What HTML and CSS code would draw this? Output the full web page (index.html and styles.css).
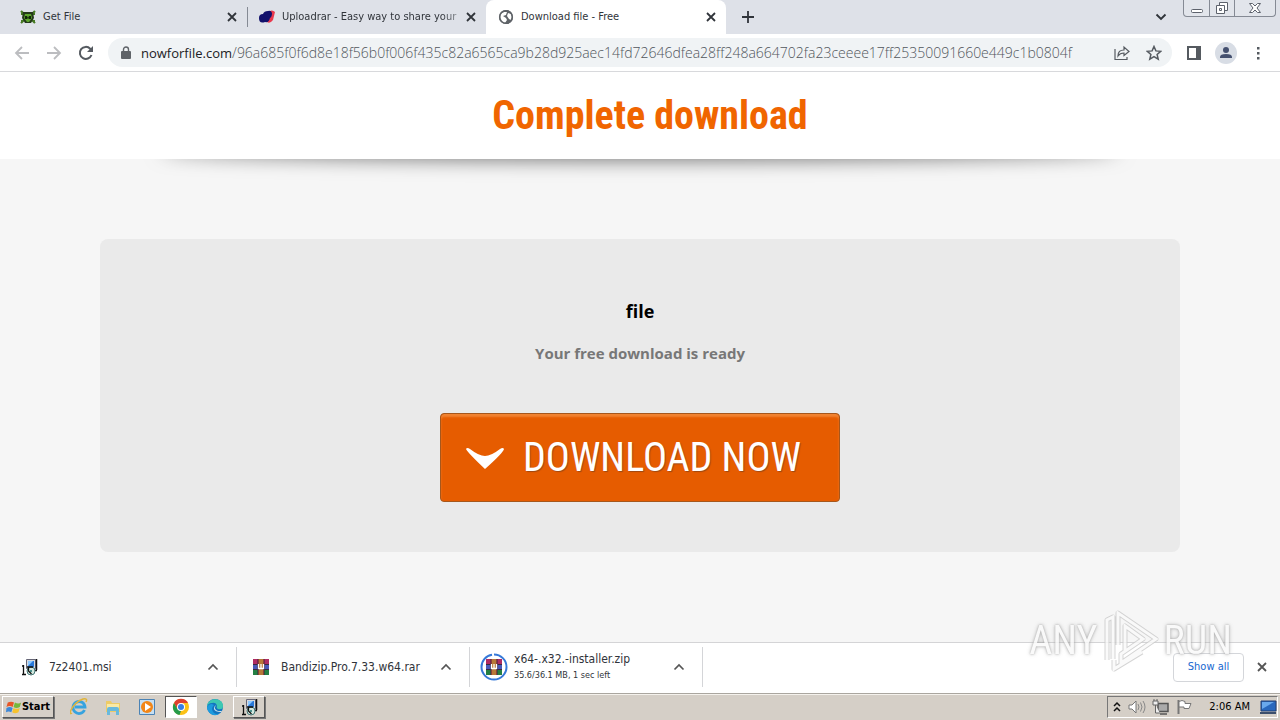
FILE: index.html
```html
<!DOCTYPE html>
<html lang="en">
<head>
<meta charset="utf-8">
<title>Download file - Free</title>
<link rel="stylesheet" href="styles.css">
</head>
<body>
<svg class="defs" aria-hidden="true">
  <symbol id="x" viewBox="0 0 10 10"><path d="M1 1l8 8M9 1l-8 8" stroke="currentColor" stroke-width="1.8" fill="none"/></symbol>
  <symbol id="up" viewBox="0 0 12 8"><path d="M1.500 6.500L6 2l4.500 4.500" stroke="currentColor" stroke-width="1.700" fill="none"/></symbol>
  <symbol id="rar" viewBox="0 0 16 16"><path fill="#b02b62" d="M0 0h16v5H0z"/><path fill="#4858b8" d="M0 5h16v6H0z"/><path fill="#247f43" d="M0 11h16v5H0z"/><path fill="#d65a32" d="M5 0h6v16H5z"/><path d="M0 5.500h16M0 10.500h16M5 0v16M11 0v16" stroke="#3b2740" fill="none"/><path fill="#b87838" d="M6 0h4v16H6z"/><path d="M5.500 5v4.500h5V5M8 5v4" fill="none" stroke="#fff" stroke-width="1.300"/></symbol>
  <symbol id="msi" viewBox="0 0 18 18"><path fill="#d5d9de" stroke="#667" d="M6.500 1.500h9v9h-9z"/><path fill="#2878d8" d="M8 3h6v6H8z"/><path fill="#8cc8ff" d="M8 3h5L8 8z"/><path d="M16.500 1v11M9 12.500h8" stroke="#111" stroke-width="1.500"/><circle cx="11" cy="13" r="4" fill="#d5e9df" stroke="#477"/><circle cx="11" cy="13" r="1" fill="#277"/><path d="M3.500 7v9M2 16.500h4M2 8h2M7 9h6M8.500 9v4l3 3" fill="none" stroke="#111" stroke-width="1.300"/></symbol>
</svg>

<header class="tabs">
  <div class="tab">
    <svg class="icon16" viewBox="0 0 16 16"><path d="M1 2l3 3M15 2l-3 3M1 14l3-3M15 14l-3-3M1 5h3M12 5h3M1 12h3M12 12h3" stroke="#477a24" stroke-width="2.200"/><path d="M3 3h10l1 6-3 5H5L2 9z" fill="#24391a"/><path d="M5 5h6l1 4-3 4H7L4 9z" fill="#5da52d"/><path d="M5 7h2l1 2 1-2h2v3H9l-1-1-1 1H5z" fill="#102409"/></svg>
    <span class="title">Get File</span>
    <button class="close" aria-label="Close Get File"><svg viewBox="0 0 10 10"><use href="#x"/></svg></button>
  </div>
  <div class="tab divided">
    <svg class="icon16" viewBox="0 0 16 16"><path d="M9 3q4-3 7 0l-2 8q-3 4-6 2z" fill="#e9384d"/><path d="M0 9q0-4 4-4 1-3 5-3 3-1 4 2 0 4-2 5-1 5-5 4-6 2-6-4z" fill="#11106b"/></svg>
    <span class="title fade">Uploadrar - Easy way to share your</span>
    <button class="close" aria-label="Close Uploadrar"><svg viewBox="0 0 10 10"><use href="#x"/></svg></button>
  </div>
  <div class="tab active">
    <svg class="icon16" viewBox="0 0 16 16"><circle cx="8" cy="8" r="7" fill="#5f6368"/><path d="M2 8q0-4 4-5l3 0-1 3-3 1 3 2 1 2-2 3q-5-1-5-6zM10 4l3 1 1 3-1 3-2-1-2-3z" fill="#fff"/><circle cx="8" cy="8" r="6.300" fill="none" stroke="#5f6368" stroke-width="1.600"/></svg>
    <span class="title">Download file - Free</span>
    <button class="close" aria-label="Close Download file"><svg viewBox="0 0 10 10"><use href="#x"/></svg></button>
  </div>
  <button class="newtab" aria-label="New tab"><svg viewBox="0 0 12 12"><path d="M6 0v12M0 6h12" stroke="currentColor" stroke-width="1.800"/></svg></button>
  <button class="search" aria-label="Search tabs"><svg viewBox="0 0 12 8"><path d="M1.500 1.500L6 6l4.500-4.500" stroke="currentColor" stroke-width="1.900" fill="none"/></svg></button>
  <div class="caption">
    <button aria-label="Minimize"><svg viewBox="0 0 14 14"><rect x="1.500" y="8.500" width="11" height="3" rx="1" fill="#fff" stroke="#5d626c"/></svg></button>
    <button aria-label="Restore"><svg viewBox="0 0 14 14"><path fill="#fff" stroke="#5d626c" d="M4.500 1.500h8v8h-8z"/><path fill="#fff" stroke="#5d626c" d="M1.500 4.500h8v8h-8zM4.500 7.500h2v2h-2z"/></svg></button>
    <button aria-label="Close window"><svg viewBox="0 0 14 14"><path fill="#fff" stroke="#5d626c" d="M1.500 2.500h3L7 5l2.500-2.500h3L9 7l3.500 4.500h-3L7 9l-2.500 2.500h-3L5 7z"/></svg></button>
  </div>
</header>

<nav class="toolbar" aria-label="Browser">
  <button class="nav off" aria-label="Back"><svg viewBox="0 0 16 16"><path d="M15 8H2M8 2L2 8l6 6" fill="none" stroke="currentColor" stroke-width="1.800"/></svg></button>
  <button class="nav off" aria-label="Forward"><svg viewBox="0 0 16 16"><path d="M1 8h13M8 2l6 6-6 6" fill="none" stroke="currentColor" stroke-width="1.800"/></svg></button>
  <button class="nav" aria-label="Reload"><svg viewBox="0 0 16 16"><path d="M13.500 10A6 6 0 1 1 12.200 3.700L14 5.500" fill="none" stroke="currentColor" stroke-width="2"/><path d="M15 1v6H9z" fill="currentColor"/></svg></button>
  <div class="omnibox">
    <svg class="lock" viewBox="0 0 10 14"><path d="M1 5h8q1 0 1 1v6q0 1-1 1H1q-1 0-1-1V6q0-1 1-1z" fill="#5f6368"/><path d="M2.500 6V3.500a2.500 2.500 0 0 1 5 0V6" fill="none" stroke="#5f6368" stroke-width="1.400"/></svg>
    <div class="url" role="textbox" aria-label="Address"><b>nowforfile.com</b>/96a685f0f6d8e18f56b0f006f435c82a6565ca9b28d925aec14fd72646dfea28ff248a664702fa23ceeee17ff25350091660e449c1b0804f</div>
    <button class="nav" aria-label="Share"><svg viewBox="0 0 16 16"><path d="M1 4v10.500h12V12M4 11q0-6 6-6V2l5 4.500-5 4V8q-4 0-6 3z" fill="none" stroke="currentColor" stroke-width="1.200"/></svg></button>
    <button class="nav" aria-label="Bookmark"><svg viewBox="0 0 16 16"><path d="M8 1.500l1.900 4.400 4.800.4-3.600 3.200 1.100 4.700L8 11.700l-4.200 2.500 1.100-4.700-3.600-3.200 4.800-.4z" fill="none" stroke="currentColor" stroke-width="1.500"/></svg></button>
  </div>
  <button class="nav" aria-label="Side panel"><svg viewBox="0 0 16 16"><path d="M2 2h12v12H2z" fill="none" stroke="currentColor" stroke-width="2"/><path d="M10 2h4v12h-4z" fill="currentColor"/></svg></button>
  <button class="nav avatar" aria-label="Profile"><svg viewBox="0 0 22 22"><circle cx="11" cy="11" r="11" fill="#d8dde5"/><circle cx="11" cy="8" r="3" fill="#44506f"/><path d="M5 16v-1q0-3 6-3t6 3v1z" fill="#44506f"/></svg></button>
  <button class="nav" aria-label="Menu"><svg viewBox="0 0 16 16"><path d="M7 2h2.500v2.500H7zM7 7h2.500v2.500H7zM7 12h2.500v2.500H7z" fill="currentColor"/></svg></button>
</nav>

<main class="page">
  <div class="masthead"><h1>Complete download</h1></div>
  <div class="shade"></div>
  <section class="card">
    <h2>file</h2>
    <p>Your free download is ready</p>
    <button class="download"><svg viewBox="0 0 40 22"><path d="M1 2q1-2 4 0 9 7 15 7t15-7q3-2 4 0-1 4-19 20Q3 6 1 2z" fill="#fff"/></svg><span>DOWNLOAD NOW</span></button>
  </section>
</main>

<aside class="shelf" aria-label="Downloads">
  <div class="item"><svg class="file" viewBox="0 0 18 18"><use href="#msi"/></svg><div class="name">7z2401.msi</div><button aria-label="Options for 7z2401.msi"><svg viewBox="0 0 12 8"><use href="#up"/></svg></button></div>
  <div class="item archive"><svg class="file" viewBox="0 0 18 18"><use href="#rar" x="1" y="1" width="16" height="16"/></svg><div class="name">Bandizip.Pro.7.33.w64.rar</div><button aria-label="Options for Bandizip"><svg viewBox="0 0 12 8"><use href="#up"/></svg></button></div>
  <div class="item busy"><svg class="file" viewBox="0 0 28 28"><circle cx="14" cy="14" r="12.500" fill="none" stroke="#3678d8" stroke-width="2" stroke-dasharray="76 3" transform="rotate(-90 14 14)"/><use href="#rar" x="6" y="6" width="16" height="16"/></svg><div class="name">x64-.x32.-installer.zip<small>35.6/36.1 MB, 1 sec left</small></div><button aria-label="Options for installer"><svg viewBox="0 0 12 8"><use href="#up"/></svg></button></div>
  <button class="showall">Show all</button>
  <button class="dismiss" aria-label="Close downloads"><svg viewBox="0 0 10 10"><use href="#x"/></svg></button>
</aside>

<footer class="taskbar">
  <button class="start"><svg viewBox="0 0 18 16"><path d="M2 3q4-2 7 0L7.500 8Q4 6 .5 8z" fill="#e85627"/><path d="M10 3q4 2 7 0l-1.500 5q-4 2-7 0z" fill="#76b83a"/><path d="M.5 9q4-2 7 0L6 14q-3-2-6 0z" fill="#3d88d8"/><path d="M8.500 9q3 2 7 0L14 14q-4 2-7 0z" fill="#f6c22d"/></svg>Start</button>
  <button class="task" aria-label="Internet Explorer"><svg viewBox="0 0 18 18"><path d="M14.500 12A6 6 0 1 1 15 9H5" fill="none" stroke="#36a3df" stroke-width="2.800"/><path d="M2 15Q-1 17 1 12 5 4 13 1q5-1 3 3" fill="none" stroke="#e0b43b" stroke-width="1.500"/></svg></button>
  <button class="task" aria-label="Explorer"><svg viewBox="0 0 18 18"><path d="M2 3h5l1 2h8v9H2z" fill="#edcb67"/><path d="M3 6h12v7H3z" fill="#fae9a4"/><path d="M3 11q0-2 2-2h8q2 0 2 2v6h-3v-4H6v4H3z" fill="#69b9dc"/></svg></button>
  <button class="task" aria-label="Media Player"><svg viewBox="0 0 18 18"><path d="M1.500 1.500h15v15h-15z" fill="#c6dff2" stroke="#4b83b5"/><circle cx="9" cy="9" r="6" fill="#f28617"/><path d="M7 5l6 4-6 4z" fill="#fff"/></svg></button>
  <button class="task pressed" aria-label="Chrome"><svg viewBox="0 0 18 18"><circle cx="9" cy="9" r="8" fill="#fbc116"/><path d="M2 5A8 8 0 0 1 16 5H9L5.500 11z" fill="#df4030"/><path d="M2 5l3.500 6L9 13l-1.500 4A8 8 0 0 1 2 5z" fill="#259b4a"/><circle cx="9" cy="9" r="4" fill="#fff"/><circle cx="9" cy="9" r="3" fill="#367ee5"/></svg></button>
  <button class="task" aria-label="Edge"><svg viewBox="0 0 18 18"><circle cx="9" cy="9" r="8" fill="#1375bf"/><path d="M1 9C1-1 17-1 17 8q0 4-5 3-2-1-1-3-1-4-5-3-4 0-5 4z" fill="#3dc8b2"/><path d="M1 9q3-5 7-2-4 4 0 8 3 2 6 0-4 4-9 1-4-3-4-7z" fill="#1c9bde"/><path d="M10 7q-3 4 2 6h4l-1 1q-6 0-7-3 0-3 2-4z" fill="#d7e8ed"/></svg></button>
  <button class="task raised" aria-label="Installer"><svg viewBox="0 0 18 18"><use href="#msi"/></svg></button>
  <div class="tray">
    <svg viewBox="0 0 10 14"><path d="M2 6l3-3 3 3M2 11l3-3 3 3" fill="none" stroke="#111" stroke-width="1.500"/></svg>
    <svg class="wide" viewBox="0 0 18 16"><path d="M1 6h3l4-4v12l-4-4H1z" fill="#fff" stroke="#777"/><path d="M10 5q2 3 0 6M12.500 3.500q3 4.500 0 9M15 2q4 6 0 12" fill="none" stroke="#888"/></svg>
    <svg class="wide" viewBox="0 0 18 16"><path d="M6 4.500h10v8H6zM8 15h7" fill="#aaa" stroke="#555" stroke-width="1.500"/><path d="M1 2h5v4H1zM3.500 6v8H8M2 0v2M5 0v2" fill="#eee" stroke="#666"/></svg>
    <svg class="wide" viewBox="0 0 18 16"><path d="M2.500 1v14" stroke="#777" stroke-width="2"/><path d="M3 2.500q3-2 6 0v2h6l-2 5H8V8H3z" fill="#fff" stroke="#777"/></svg>
    <time>2:06 AM</time>
    <svg class="wide" viewBox="0 0 18 16"><path d="M2 2h15v10H2z" fill="#2868bd" stroke="#223e70"/><path d="M3 3h12L3 10z" fill="#69a9ec"/><path d="M1 14h16" stroke="#3c4f6d" stroke-width="2"/></svg>
  </div>
</footer>

<div class="watermark" aria-hidden="true"><span>ANY</span><svg viewBox="0 0 58 64"><path d="M5 51V11l6-3v42M16 36V4l38 26-35 24v-9l22-15L23 17v26M12 51v9l28-17" fill="none" stroke="#cacaca" stroke-width="5" stroke-linejoin="round"/><path d="M5 51V11l6-3v42M16 36V4l38 26-35 24v-9l22-15L23 17v26M12 51v9l28-17" fill="none" stroke="#fafafa" stroke-width="3"/></svg><span>RUN</span></div>
</body>
</html>
```
FILE: styles.css
```css
* { box-sizing: border-box; }
body { margin: 0; height: 100vh; display: flex; flex-direction: column; overflow: hidden; font: 11px/16px "DejaVu Sans Condensed", "Noto Sans", sans-serif; color: #30343a; background: #f6f6f6; }
button { font: inherit; color: inherit; border: 0; padding: 0; background: none; display: flex; align-items: center; justify-content: center; flex: none; }
svg { display: block; flex: none; }
.defs { position: absolute; width: 0; height: 0; }

.tabs { flex: none; height: 34px; display: flex; background: #dee1e8; }
.tab { width: 239px; padding: 0 7px 0 12px; display: flex; align-items: center; }
.tab:first-child { width: 247px; padding-left: 20px; }
.icon16 { width: 16px; height: 16px; margin-right: 7px; }
.title { flex: 1; min-width: 0; white-space: nowrap; overflow: hidden; }
.fade { -webkit-mask-image: linear-gradient(to right, #000 88%, rgba(0,0,0,.3)); mask-image: linear-gradient(to right, #000 88%, rgba(0,0,0,.3)); }
.divided { background: linear-gradient(#858a94, #858a94) left center / 1px 20px no-repeat; }
.active { background: #fff; border-radius: 8px 8px 0 0; width: 240px; }
.close { width: 16px; height: 16px; }
.close svg { width: 10px; height: 10px; }
.newtab { width: 44px; }
.newtab svg { width: 12px; height: 12px; }
.search { margin-left: auto; width: 44px; }
.search svg { width: 12px; height: 8px; }
.caption { display: flex; height: 17px; border: 1px solid #858a94; border-top: 0; border-radius: 0 0 4px 4px; margin-right: 4px; background: #e2e5eb; }
.caption button { width: 25px; }
.caption button + button { border-left: 1px solid #858a94; }
.caption button:last-child { width: 41px; }
.caption svg { width: 14px; height: 14px; }

.toolbar { flex: none; height: 38px; display: flex; align-items: center; padding: 0 6px; background: #fff; border-bottom: 1px solid #d8d9dc; color: #555a60; }
.nav { width: 32px; height: 30px; }
.nav svg { width: 16px; height: 16px; }
.off { color: #bcbdc0; }
.omnibox { flex: 1; min-width: 0; height: 29px; display: flex; align-items: center; border-radius: 15px; background: #f0f3f5; padding: 0 2px 0 13px; margin: 0 6px; }
.lock { width: 10px; height: 14px; margin-right: 10px; }
.url { flex: 1; min-width: 0; overflow: hidden; white-space: nowrap; font: 300 14px/20px "Open Sans", sans-serif; color: #50565c; }
.url b { font-size: 13px; font-weight: 400; color: #202124; }
.avatar svg { width: 22px; height: 22px; }

.page { flex: 1; min-height: 0; background: #f6f6f6; }
.masthead { background: #fff; height: 87px; padding-left: 20px; display: flex; align-items: center; justify-content: center; }
h1 { margin: 0; font: 700 40px/48px "Roboto Condensed", "Liberation Sans Narrow", Roboto, sans-serif; color: #f06500; }
.shade { height: 30px; overflow: hidden; }
.shade::before { content: ""; display: block; height: 20px; margin: -20px 160px 0; border-radius: 50% / 10px; box-shadow: 0 0 20px rgba(0,0,0,.6); }
.card { margin: 50px 100px 0; padding: 59px 20px 50px; display: flex; flex-direction: column; align-items: center; background: #eaeaea; border-radius: 8px; font-family: "Open Sans", sans-serif; }
h2 { margin: 0; font-size: 18px; line-height: 26px; color: #000; }
.card p { margin: 18px 0 49px; font-size: 15px; line-height: 22px; font-weight: 700; color: #777; }
.download { width: 400px; max-width: 100%; height: 89px; padding-left: 24px; gap: 18px; justify-content: flex-start; border: 1px solid #a6571c; border-radius: 4px; background: #e65c00; box-shadow: inset 0 3px 2px #f18230; color: #fff; font: 400 40px/48px "Roboto Condensed", "Liberation Sans Narrow", Roboto, sans-serif; text-shadow: 1px 1px 1px #9d4812; white-space: nowrap; }
.download svg { width: 40px; height: 22px; }

.shelf { flex: none; height: 51px; display: flex; align-items: center; background: #fff; border-top: 1px solid #d4d4d6; padding-bottom: 2px; font-size: 12px; }
.item { width: 233px; height: 40px; display: flex; align-items: center; gap: 11px; padding: 0 17px 0 20px; border-right: 1px solid #d4d5d8; }
.item:first-child { width: 237px; }
.file { width: 18px; height: 18px; }
.name { flex: 1; min-width: 0; white-space: nowrap; }
.name small { display: block; font-size: 9px; }
.archive { padding-left: 15px; }
.busy { padding-left: 10px; gap: 6px; }
.busy .file { width: 28px; height: 28px; }
.item button { color: #555; }
.item button svg { width: 12px; height: 8px; }
.showall { margin-left: auto; width: 71px; height: 29px; border: 1px solid #d4d6da; border-radius: 4px; color: #1767cf; font-size: 11px; }
.dismiss { width: 36px; height: 30px; color: #555; }
.dismiss svg { width: 10px; height: 10px; }

.taskbar { flex: none; height: 27px; display: flex; align-items: center; background: #d5cfc7; border-top: 1px solid #aaa69f; box-shadow: inset 0 1px #f5f2ed; padding: 2px; }
.start, .raised { border: 1px solid; border-color: #fff #555 #555 #fff; box-shadow: 1px 1px #777; }
.start { width: 52px; height: 22px; color: #000; font-weight: 700; margin-right: 9px; }
.start svg { width: 16px; height: 16px; }
.task { width: 32px; height: 22px; margin-right: 2px; }
.task svg { width: 18px; height: 18px; }
.pressed { background: #fff; border: 1px solid; border-color: #555 #fff #fff #555; }
.tray { margin-left: auto; height: 22px; display: flex; align-items: center; gap: 6px; border: 1px solid; border-color: #777 #fff #fff #777; padding: 0 0 0 4px; color: #000; }
.tray svg { width: 10px; height: 14px; }
.tray .wide { width: 18px; height: 16px; }
.tray time { margin: 0 3px 0 9px; white-space: nowrap; }

.watermark { position: absolute; right: 48px; bottom: 47px; display: flex; align-items: center; gap: 4px; opacity: .8; pointer-events: none; color: #fafafa; font: 400 40px/64px "Roboto Condensed", "Liberation Sans Narrow", sans-serif; text-shadow: 0 0 2px #999, 0 0 4px #aaa; }
.watermark svg { width: 58px; height: 64px; }
```
